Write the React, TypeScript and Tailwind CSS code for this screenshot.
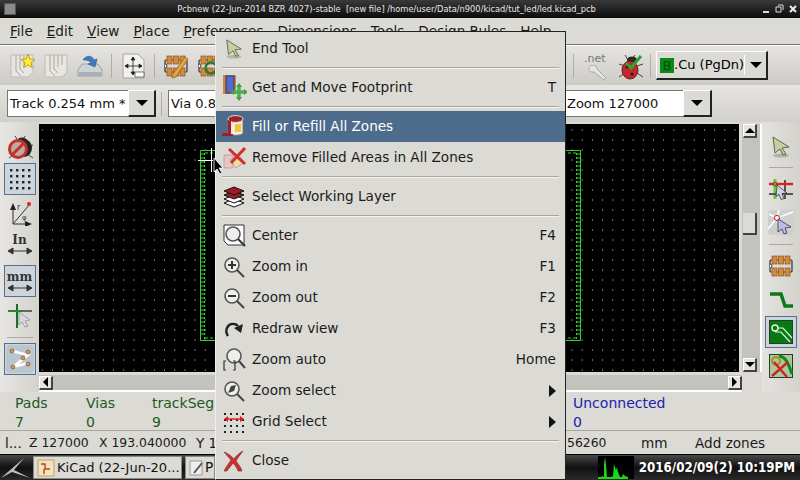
import React from "react";

const font = "font-['DejaVu_Sans',sans-serif]";

// Toolbar icons, small hand drawn svgs
function NewBoard({ star }: { star?: boolean }) {
  return (
    <svg width="26" height="26" viewBox="0 0 26 26">
      <path d="M2 2h22v17l-5 5H2z" fill="#e8e6de" stroke="#bbb" />
      <path d="M7 2v16l5 5M11 2v14l4 4M15 2v12M19 2v10" stroke="#a9a79f" fill="none" />
      {star && <path d="M19 1l2 5 5 .4-4 3.3 1.3 5-4.3-2.8-4.3 2.8 1.3-5-4-3.3 5-.4z" fill="#ffe93b" stroke="#b7a422" />}
    </svg>
  );
}

function SaveIcon() {
  return (
    <svg width="26" height="26" viewBox="0 0 26 26">
      <path d="M1 17l4-6h16l4 6v6H1z" fill="#d0d3d6" stroke="#9a9ea2" />
      <path d="M2 19h22v4H2z" fill="#aab0b5" />
      <path d="M6 7c3-5 9-5 11 0l3-1-2 8-7-3 3-1c-2-3-5-3-8-3z" fill="#3e78c0" stroke="#255a99" strokeWidth="0.6" />
    </svg>
  );
}

function PageIcon() {
  return (
    <svg width="26" height="26" viewBox="0 0 26 26">
      <path d="M3 1h15l6 6v18H3z" fill="#f1f0ea" stroke="#a5a5a0" />
      <path d="M13 4v18M5 13h17M13 4l-2 3h4zM13 22l-2-3h4zM5 13l3-2v4zM22 13l-3-2v4z" fill="#222" stroke="#222" strokeWidth="0.8" />
      <path d="M15 19h9v5h-9z" fill="#fff" stroke="#444" strokeWidth="0.7" />
    </svg>
  );
}

function Chip({ extra }: { extra?: "pencil" | "lens" }) {
  return (
    <svg width="26" height="26" viewBox="0 0 26 26">
      <rect x="2" y="7" width="22" height="12" rx="1" fill="none" stroke="#333" strokeWidth="1.2" />
      <path d="M2 11a2 2 0 010 4" fill="#fff" stroke="#333" />
      {[4, 10.5, 17].map((x) => (
        <g key={x}>
          <rect x={x} y="3" width="5" height="8" fill="#d48a3c" stroke="#8a5520" strokeWidth="0.7" />
          <rect x={x} y="15" width="5" height="8" fill="#d48a3c" stroke="#8a5520" strokeWidth="0.7" />
        </g>
      ))}
      {extra === "pencil" && <path d="M22 4l3 2-12 18-4 1 1-4z" fill="#e9a33c" stroke="#8a5a1c" strokeWidth="0.7" />}
      {extra === "lens" && (
        <g>
          <circle cx="14" cy="15" r="5.5" fill="none" stroke="#2a7a30" strokeWidth="2.4" />
          <path d="M18 19l6 6" stroke="#444" strokeWidth="2.4" />
        </g>
      )}
    </svg>
  );
}

function Cursor({ size = 22 }: { size?: number }) {
  return (
    <svg width={size} height={size} viewBox="0 0 22 22">
      <ellipse cx="11" cy="19.5" rx="8" ry="2" fill="#a3a08f" opacity="0.7" />
      <path d="M3 1l16 10-7 1 4 6-3 1-3-6-5 4z" fill="#c6cfa0" stroke="#5d6650" />
    </svg>
  );
}

function NetIcon() {
  return (
    <div className="relative w-[24px] h-[28px] shrink-0">
      <span className="absolute left-0 top-[-1px] text-[11px] text-[#777]">.net</span>
      <svg width="20" height="16" viewBox="0 0 20 16" className="absolute left-[3px] top-[13px]">
        <path d="M3 1c-2 2-1 5 1 6l3 0 10 8 2-2-9-9-1-3C8 0 5 0 3 1z" fill="#e4e4e2" stroke="#9a9a98" strokeWidth="0.8" />
      </svg>
    </div>
  );
}

function BugIcon({ check }: { check?: boolean }) {
  return (
    <svg width="26" height="28" viewBox="0 0 26 28" className="shrink-0">
      <path d="M8 3l3 5M18 3l-3 5M2 12l6 2M26 12l-6 2M2 25l6-4M26 25l-6-4" stroke="#444" />
      <ellipse cx="15" cy="8" rx="5" ry="3.4" fill="#2a2a2a" />
      {check ? (
        <g>
          <ellipse cx="13" cy="18" rx="8" ry="9" fill="#c0282c" stroke="#701a1c" />
          <circle cx="10" cy="15" r="1.5" fill="#401010" />
          <circle cx="15" cy="22" r="1.5" fill="#401010" />
          <path d="M9 11l5 5 10-12" stroke="#2aa52f" strokeWidth="3" fill="none" />
        </g>
      ) : (
        <g>
          <ellipse cx="17" cy="15" rx="8" ry="9" fill="#222" />
          <circle cx="11" cy="16" r="8.5" fill="#bfa9a0" stroke="#c4302c" strokeWidth="3" />
          <path d="M5 22l12-12" stroke="#c4302c" strokeWidth="3" />
        </g>
      )}
    </svg>
  );
}

function GridIcon() {
  return (
    <svg width="26" height="26" viewBox="0 0 26 26">
      {[3, 9, 15, 21].flatMap((y) =>
        [3, 9, 15, 21].map((x) => <rect key={`${x}-${y}`} x={x} y={y} width="2.4" height="2.4" fill="#222" />)
      )}
    </svg>
  );
}

function PolarIcon() {
  return (
    <svg width="26" height="26" viewBox="0 0 26 26">
      <path d="M6 24V7M6 24h17M6 24l17-20" stroke="#333" strokeWidth="1" fill="none" />
      <path d="M6 3l-3 7h6zM25 24l-7-3v6z" fill="#222" />
      <circle cx="22" cy="4" r="2" fill="#e02020" />
      <text x="10" y="10" fontSize="8" fill="#333">r</text>
      <text x="15" y="20" fontSize="7" fill="#333">φ</text>
    </svg>
  );
}

function UnitIcon({ label }: { label: string }) {
  return (
    <div className="flex flex-col items-center leading-none">
      <span className="font-['DejaVu_Serif',serif] text-[12px] font-bold text-[#333] leading-[13px]">{label}</span>
      <svg width="26" height="8" viewBox="0 0 26 8">
        <path d="M1 4l5-3v6zM25 4l-5-3v6zM5 4h16" fill="#333" stroke="#333" />
      </svg>
    </div>
  );
}

function CrossCursor() {
  return (
    <svg width="26" height="26" viewBox="0 0 26 26">
      <path d="M10 2v24" stroke="#1d6b2d" strokeWidth="2" />
      <path d="M1 9h24" stroke="#333" strokeWidth="1.4" />
      <path d="M1 9h14" stroke="#1d8b2d" strokeWidth="2" />
      <path d="M12 10l11 8-5 1 3 5-3 1-3-5-3 3z" fill="#d6d8de" stroke="#888" strokeWidth="0.7" />
    </svg>
  );
}

function RatsIcon() {
  return (
    <svg width="28" height="28" viewBox="0 0 28 28">
      <rect width="28" height="28" rx="4" fill="#b9c6d2" />
      <path d="M6 6l16 4-15 12 15-4" stroke="#fff" strokeWidth="2.6" fill="none" />
      {[[6, 6], [22, 7], [17, 13], [7, 22], [22, 19]].map(([x, y]) => (
        <circle key={`${x}${y}`} cx={x} cy={y} r="2" fill="#d79a4c" stroke="#7a5522" strokeWidth="0.7" />
      ))}
    </svg>
  );
}

function GridCursor() {
  return (
    <svg width="26" height="22" viewBox="0 0 26 22">
      <path d="M7 1v20" stroke="#5fd030" strokeWidth="3" />
      <path d="M17 2v19M1 16h24" stroke="#555" strokeWidth="2" />
      <path d="M1 6h24" stroke="#e02020" strokeWidth="2.4" />
      <circle cx="7" cy="6" r="2" fill="#b88a20" stroke="#333" strokeWidth="0.6" />
      <path d="M9 7l10 8-5 .5 2 5-3 1-2-5-3 2z" fill="#cfd2ea" stroke="#222" strokeWidth="0.7" />
    </svg>
  );
}

function RayCursor() {
  return (
    <svg width="28" height="27" viewBox="0 0 28 27">
      <rect x="1" y="1" width="26" height="25" rx="4" fill="#cfcfcf" />
      <path d="M10 9L2 5M10 9l2-8M10 9l16-6M10 9L1 20M10 9l2 7" stroke="#fff" strokeWidth="1.6" />
      <circle cx="10" cy="9" r="2.6" fill="none" stroke="#d02020" />
      <path d="M11 10l13 8-6 1 2 5-3 1-2-5-4 3z" fill="#b9bde6" stroke="#222" strokeWidth="0.7" />
    </svg>
  );
}

function TrackIcon() {
  return (
    <svg width="26" height="18" viewBox="0 0 26 18">
      <path d="M2 3h11l4 12h8" stroke="#0a7a18" strokeWidth="3.4" fill="none" />
    </svg>
  );
}

function ZoneIcon() {
  return (
    <svg width="24" height="24" viewBox="0 0 24 24">
      <rect x="0.5" y="0.5" width="23" height="23" fill="#057a10" stroke="#2a3a2a" />
      <circle cx="6" cy="8" r="3" fill="none" stroke="#e6f0e6" strokeWidth="1.4" />
      <path d="M9 8h5l9 10M6 12h6l9 10" stroke="#e6f0e6" strokeWidth="1.2" fill="none" />
    </svg>
  );
}

function NoZoneIcon() {
  return (
    <svg width="24" height="24" viewBox="0 0 24 24">
      <rect x="0.5" y="0.5" width="23" height="23" fill="#a8c8a0" stroke="#2a3a2a" />
      <path d="M10 2c8 1 10 10 13 18" stroke="#0e8a20" strokeWidth="3" fill="none" />
      <circle cx="7" cy="7" r="4" fill="none" stroke="#a8901c" strokeWidth="2" />
      <path d="M3 22L19 8M5 8l13 15" stroke="#d42020" strokeWidth="2.4" />
    </svg>
  );
}

function LayerIcon() {
  return (
    <svg width="24" height="22" viewBox="0 0 24 22">
      <path d="M2 17l10-4 10 4-10 4z" fill="#fff" stroke="#111" />
      <path d="M2 13l10-4 10 4-10 4z" fill="#fff" stroke="#111" />
      <path d="M2 9l10-4 10 4-10 4z" fill="#9a1c24" stroke="#111" />
      <path d="M2 5l10-4 10 4-10 4z" fill="#9a1c24" stroke="#111" />
    </svg>
  );
}

function Magnifier({ mark }: { mark?: string }) {
  return (
    <svg width="22" height="22" viewBox="0 0 22 22">
      <circle cx="9" cy="9" r="7" fill="#eeeeec" stroke="#555" strokeWidth="1.6" />
      <path d="M14 14l7 7" stroke="#444" strokeWidth="2" />
      {mark === "plus" && <path d="M5 9h8M9 5v8" stroke="#333" strokeWidth="2" />}
      {mark === "minus" && <path d="M5 9h8" stroke="#333" strokeWidth="2" />}
      {mark === "select" && <path d="M5 13l3-7 5-1-2 6z" fill="#444" />}
    </svg>
  );
}

function CenterIcon() {
  return (
    <svg width="24" height="24" viewBox="0 0 24 24">
      <path d="M2 1h20v20H6l-4-4z" fill="#fff" stroke="#333" />
      <circle cx="11" cy="10" r="7" fill="#eeeeec" stroke="#555" strokeWidth="1.6" />
      <path d="M16 15l7 7" stroke="#333" strokeWidth="2" />
    </svg>
  );
}

function RedrawIcon() {
  return (
    <svg width="22" height="22" viewBox="0 0 22 22">
      <path d="M5 18C1 12 5 5 11 6c2 0 3 1 4 2" stroke="#222" strokeWidth="2.4" fill="none" />
      <path d="M20 6l-2 9-7-5z" fill="#222" />
    </svg>
  );
}

function ZoomAuto() {
  return (
    <svg width="24" height="24" viewBox="0 0 24 24">
      <circle cx="12" cy="8" r="7" fill="#eeeeec" stroke="#555" strokeWidth="1.6" />
      <path d="M17 13l6 7" stroke="#444" strokeWidth="2" />
      <path d="M4 13H2v9h2M11 13h2v9h-2" stroke="#333" strokeWidth="1.2" fill="none" />
    </svg>
  );
}

function GridSelect() {
  return (
    <svg width="22" height="22" viewBox="0 0 22 22">
      {[2, 8, 14, 20].flatMap((y) =>
        [1, 7, 13, 19].map((x) => <rect key={`${x}-${y}`} x={x} y={y} width="2" height="2" fill="#222" />)
      )}
      <path d="M2 8h18" stroke="#e01818" strokeWidth="1.4" />
      <path d="M1 8l4-3v6zM21 8l-4-3v6z" fill="#e01818" />
    </svg>
  );
}

function CloseIcon() {
  return (
    <svg width="22" height="22" viewBox="0 0 22 22">
      <path d="M1 2c7 3 9 6 10 7 2-3 5-6 9-8-3 4-6 8-7 10 2 3 5 6 6 10l-4 0c-1-3-3-6-5-8-2 3-5 6-6 8H1c2-4 5-8 7-11C6 7 3 5 1 2z" fill="#c8342c" stroke="#7d201c" strokeWidth="0.6" />
    </svg>
  );
}

function FootprintMove() {
  return (
    <svg width="26" height="26" viewBox="0 0 26 26">
      <rect x="2" y="0" width="13" height="19" fill="#c98a3c" />
      <rect x="5" y="1" width="8" height="17" fill="#5a68c8" stroke="#2c3377" />
      <path d="M18 10v14M11 17h14" stroke="#4cb04c" strokeWidth="3.4" />
      <path d="M18 8l-3 4h6zM18 26l-3-4h6zM9 17l4-3v6zM27 17l-4-3v6z" fill="#3ea03e" />
    </svg>
  );
}

function FillIcon() {
  return (
    <svg width="26" height="26" viewBox="0 0 26 26">
      <path d="M7 5v14c0 3 15 3 15 0V5z" fill="#f2ede0" stroke="#777" />
      <ellipse cx="14.5" cy="5" rx="7.5" ry="3.4" fill="#a2202a" stroke="#e6e0d4" />
      <rect x="14" y="10" width="6" height="8" fill="#eec63a" />
      <path d="M7 6v13H1v3h11v-2H10V7z" fill="#a2202a" />
    </svg>
  );
}

function RemoveFill() {
  return (
    <svg width="26" height="24" viewBox="0 0 26 24">
      <path d="M3 9h9v13H3z" fill="#e3c8c0" stroke="#b48" strokeWidth="0.4" />
      <path d="M9 14l9-5 5 7-8 6z" fill="#f0dca0" stroke="#aaa" />
      <path d="M8 3l16 15M24 2L10 17" stroke="#d0302c" strokeWidth="3" />
    </svg>
  );
}

function BoardOutline() {
  // only the two ends of the outline stay visible beside the open menu
  const ticks = [];
  for (let y = 4; y < 188; y += 4) ticks.push(y);
  return (
    <svg width="382" height="192" viewBox="0 0 382 192" className="absolute left-[161px] top-[26px]">
      <path d="M.5.5h380v190H.5z" fill="none" stroke="#35d435" />
      <path d="M4.5 3v186M376.5 3v186" stroke="#35d435" strokeDasharray="2 2" />
      {ticks.map((y) => (
        <g key={y}>
          <path d={`M1 ${y}h3`} stroke="#35d435" />
          <path d={`M377 ${y}h3`} stroke="#35d435" />
        </g>
      ))}
      <path d="M5 3h8M368 3h8M5 188h8M368 188h8" stroke="#35d435" strokeDasharray="3 2" />
    </svg>
  );
}

const Sep = () => <div className="h-[2px] mx-[6px] my-[3px] border-t border-[#a8a6a0] bg-[#f4f3f0]" />;

function MenuItem({ icon, label, hot, active, arrow }: { icon: React.ReactNode; label: string; hot?: string; active?: boolean; arrow?: boolean }) {
  return (
    <div className={`flex items-center h-[31px] pl-[3px] pr-[9px] ${active ? "bg-[#4d6b8a] text-white" : "text-[#1a1a1a]"}`}>
      <div className="w-[33px] flex justify-center shrink-0 pr-[3px]">{icon}</div>
      <span className="flex-1">{label}</span>
      {hot && <span>{hot}</span>}
      {arrow && <span className="w-0 h-0 border-y-[6px] border-y-transparent border-l-[7px] border-l-[#111]" />}
    </div>
  );
}

function Arrow({ dir }: { dir: "up" | "down" | "left" | "right" }) {
  const cls = {
    up: "border-x-[5px] border-x-transparent border-b-[5px] border-b-black",
    down: "border-x-[5px] border-x-transparent border-t-[5px] border-t-black",
    left: "border-y-[5px] border-y-transparent border-r-[5px] border-r-black",
    right: "border-y-[5px] border-y-transparent border-l-[5px] border-l-black",
  }[dir];
  return (
    <div className="w-[14px] h-[14px] flex items-center justify-center bg-[#e6e4e0] border-r-2 border-b-2 border-black/70 border-t border-l border-t-white border-l-white shrink-0">
      <div className={`w-0 h-0 ${cls}`} />
    </div>
  );
}

function Combo({ text, w, btn = 28 }: { text: string; w: number; btn?: number }) {
  return (
    <div className="flex h-[27px] shrink-0 text-[13px]" style={{ width: w }}>
      <div className="flex-1 min-w-0 bg-white border border-[#777] border-r-0 pl-[2px] flex items-center whitespace-nowrap overflow-hidden text-[#111]">{text}</div>
      <div className="flex items-center justify-center bg-[#dcdad5] border-r-2 border-b-2 border-[#222] border-t border-l border-t-white border-l-white shrink-0" style={{ width: btn }}>
        <span className="w-0 h-0 border-x-[6px] border-x-transparent border-t-[6px] border-t-black" />
      </div>
    </div>
  );
}

const TbSep = () => <div className="w-px h-[24px] bg-[#b0aea8] shrink-0" />;

function Toggled({ children, className = "" }: { children: React.ReactNode; className?: string }) {
  return <div className={`w-[32px] h-[32px] flex items-center justify-center border border-[#56708c] bg-[#ccd4dc] shrink-0 ${className}`}>{children}</div>;
}

export default function App() {
  return (
    <div className={`${font} relative w-[800px] h-[480px] overflow-hidden bg-[#dcdad5] text-[13.6px] flex flex-col`}>
      {/* title bar */}
      <div className="h-[18px] shrink-0 flex items-center bg-gradient-to-b from-[#3a3a3a] to-[#0c0c0c] text-[#e8e8e8] relative">
        <div className="w-[12px] h-[12px] ml-[4px] bg-[#8a8a86] border border-[#555] shrink-0" />
        <div className="flex-1 text-center pr-[4px] whitespace-pre text-[9.2px] [font-stretch:condensed]">Pcbnew (22-Jun-2014 BZR 4027)-stable  [new file] /home/user/Data/n900/kicad/tut_led/led.kicad_pcb</div>
        <svg width="36" height="10" viewBox="0 0 36 10" className="mr-[3px] shrink-0">
          <path d="M2 8h6" stroke="#ddd" strokeWidth="2" />
          <path d="M15 3h5v5h-5zM17 1h5v5" fill="none" stroke="#ddd" />
          <path d="M29 2l6 6M35 2l-6 6" stroke="#eee" strokeWidth="2" />
        </svg>
      </div>

      {/* menu bar */}
      <div className="h-[27px] shrink-0 flex items-center pl-[10px] gap-[14px] border-b border-[#77756f] text-[#1a1a1a] whitespace-nowrap">
        {["File", "Edit", "View", "Place", "Preferences", "Dimensions", "Tools", "Design Rules", "Help"].map((m) => (
          <span key={m}>
            <span className="underline">{m[0]}</span>
            {m.slice(1)}
          </span>
        ))}
      </div>

      {/* main toolbar */}
      <div className="h-[40px] shrink-0 flex items-center pl-[9px] gap-[8px] bg-gradient-to-b from-[#e6e4e0] to-[#cdcbc6] border-t border-white">
        <NewBoard star />
        <NewBoard />
        <SaveIcon />
        <TbSep />
        <PageIcon />
        <TbSep />
        <Chip extra="pencil" />
        <Chip extra="lens" />
        <div className="ml-[342px] flex items-center">
          <TbSep />
          <div className="ml-[10px]"><NetIcon /></div>
          <div className="ml-[9px]"><BugIcon check /></div>
          <div className="ml-[7px]"><TbSep /></div>
          <div className="ml-[5px] flex items-center h-[29px] w-[112px] bg-[#dcdad5] border-r-2 border-b-2 border-[#222] border-t border-l border-t-white border-l-white pl-[3px] text-[13px]">
            <span className="w-[14px] h-[15px] shrink-0 bg-[#0a8a14] text-[#044a10] text-[13px] leading-[15px] text-center">B</span>
            <span className="flex-1 whitespace-nowrap">.Cu (PgDn)</span>
            <span className="w-px h-[20px] bg-white mr-[5px] shrink-0" />
            <span className="w-0 h-0 shrink-0 border-x-[6px] border-x-transparent border-t-[6px] border-t-black mr-[5px]" />
          </div>
        </div>
      </div>

      {/* aux toolbar */}
      <div className="h-[37px] shrink-0 flex items-center pl-[7px] bg-gradient-to-b from-[#e6e4e0] to-[#d2d0cb]">
        <Combo text="Track 0.254 mm *" w={149} />
        <div className="ml-[5px]"><TbSep /></div>
        <div className="ml-[6px]"><Combo text="Via 0.8" w={200} /></div>
        <div className="ml-[196px]"><Combo text="Zoom 127000" w={148} btn={29} /></div>
      </div>

      {/* work area */}
      <div className="h-[270px] shrink-0 flex min-h-0">
        <div className="w-[39px] shrink-0 flex flex-col items-center pt-[11px] bg-gradient-to-r from-[#e8e6e2] to-[#d4d2cd]">
          <BugIcon />
          <Toggled className="mt-[2px]"><GridIcon /></Toggled>
          <div className="mt-[5px]"><PolarIcon /></div>
          <div className="mt-[8px]"><UnitIcon label="In" /></div>
          <Toggled className="mt-[10px]"><UnitIcon label="mm" /></Toggled>
          <div className="mt-[5px]"><CrossCursor /></div>
          <div className="w-[26px] h-px bg-[#aaa] mt-[9px]" />
          <Toggled className="mt-[5px]"><RatsIcon /></Toggled>
        </div>

        <div className="flex-1 flex flex-col min-w-0">
          <div className="flex-1 flex min-h-0">
            <div className="relative flex-1 mt-[2px] mb-[3px] bg-black bg-[radial-gradient(circle_at_3px_6px,#a0a0a0_0.5px,transparent_0.7px)] bg-[size:10.2px_10px]">
              <BoardOutline />
              {/* crosshair */}
              <div className="absolute left-[159px] top-[36px] w-[15px] h-px bg-white" />
              <div className="absolute left-[172px] top-[24px] h-[24px] w-px bg-white" />
            </div>
            <div className="w-[20px] shrink-0 flex flex-col ml-[3px] mt-[2px] mb-[3px] bg-[#c4c2bd] border-r-2 border-white px-[1px]">
              <Arrow dir="up" />
              <div className="flex-1 relative">
                <div className="absolute left-0 top-[75px] w-[14px] h-[22px] bg-[#dcdad5] border-r-2 border-b-2 border-black/70" />
              </div>
              <Arrow dir="down" />
            </div>
          </div>
          <div className="h-[17px] shrink-0 flex items-center bg-[#c4c2bd] mr-[20px] border-b-2 border-white">
            <Arrow dir="left" />
            <div className="flex-1" />
            <Arrow dir="right" />
          </div>
        </div>

        <div className="w-[38px] shrink-0 flex flex-col items-center pt-[14px] bg-gradient-to-r from-[#e4e2de] to-[#d4d2cd]">
          <Cursor size={22} />
          <div className="w-[24px] h-px bg-[#aaa] mt-[9px]" />
          <div className="mt-[10px]"><GridCursor /></div>
          <div className="mt-[9px]"><RayCursor /></div>
          <div className="w-[24px] h-px bg-[#aaa] mt-[8px]" />
          <div className="mt-[8px]"><Chip /></div>
          <div className="mt-[12px]"><TrackIcon /></div>
          <Toggled className="mt-[7px]"><ZoneIcon /></Toggled>
          <div className="mt-[6px]"><NoZoneIcon /></div>
        </div>
      </div>

      {/* message panel */}
      <div className="h-[39px] shrink-0 relative border-b border-b-[#a8a6a0] text-[#1d5a1d] leading-[19px] text-[14px]">
        <div className="flex pl-[15px] pt-[2px]">
          <div className="w-[71px]">Pads<br />7</div>
          <div className="w-[66px]">Vias<br />0</div>
          <div className="w-[421px] whitespace-nowrap">trackSegm<br />9</div>
          <div className="text-[#2020b0]">Unconnected<br />0</div>
        </div>
      </div>

      {/* status bar */}
      <div className="h-[23px] shrink-0 flex items-center pt-[1px] text-[#1a1a1a] whitespace-pre">
        <span className="pl-[5px] w-[29px]">l...</span>
        <span className="w-[70px] text-[12.4px]">Z 127000</span>
        <span className="w-[97px] text-[12.4px]">X 193.040000</span>
        <span className="w-[371px]">Y 1</span>
        <span className="w-[74px] text-[12.4px]">56260</span>
        <span className="w-[54px]">mm</span>
        <span>Add zones</span>
      </div>

      {/* task bar */}
      <div className="h-[26px] shrink-0 flex items-center bg-gradient-to-b from-[#4a4a4a] via-[#111] to-[#2a2a2a] border-t border-black">
        <svg width="33" height="24" viewBox="0 0 33 24" className="shrink-0">
          <path d="M1 22L24 2 14 14l16 8-18-6z" fill="#bfbfbf" />
        </svg>
        <div className="w-[149px] h-[23px] flex items-center pl-[3px] gap-[2px] bg-[#dcdad5] border border-[#888] text-[#111] whitespace-nowrap text-[13px] shrink-0">
          <svg width="18" height="18" viewBox="0 0 18 18" className="shrink-0">
            <rect x="1" y="1" width="16" height="16" fill="#f0e4c0" stroke="#c8a050" />
            <path d="M4 5h4v5h5M7 10v5" stroke="#b84020" strokeWidth="1.4" fill="none" />
          </svg>
          KiCad (22-Jun-20...
        </div>
        <div className="w-[30px] h-[23px] ml-[3px] flex items-center pl-[3px] bg-[#dcdad5] border border-[#888] text-[#111] shrink-0">
          <svg width="16" height="18" viewBox="0 0 16 18" className="shrink-0">
            <path d="M1 2h12v14H1z" fill="#eee" stroke="#999" />
            <path d="M5 14l8-10" stroke="#555" strokeWidth="2" />
          </svg>
          P
        </div>
        <div className="flex-1" />
        <svg width="36" height="23" viewBox="0 0 36 23" className="mr-[5px] shrink-0">
          <rect width="36" height="23" fill="#000" />
          <path d="M0 23v-2h3l1-1 2 1V8l1-7 1 8 1 12h4l2-1 1-12 2 6 1-3 1 5 2 5h2l1-3 2 2 3 1v3z" fill="#18d818" />
        </svg>
        <span className="text-white font-bold text-[13.2px] [font-stretch:condensed] pr-[5px] whitespace-nowrap">2016/02/09(2) 10:19PM</span>
      </div>

      {/* open context menu */}
      <div className="absolute left-[215px] top-[31px] w-[351px] h-[449px] bg-[#dcdad5] border-t border-b border-r border-[#222] border-l border-l-[#eee] pt-[1px]">
        <MenuItem icon={<Cursor size={20} />} label="End Tool" />
        <Sep />
        <MenuItem icon={<FootprintMove />} label="Get and Move Footprint" hot="T" />
        <Sep />
        <MenuItem icon={<FillIcon />} label="Fill or Refill All Zones" active />
        <MenuItem icon={<RemoveFill />} label="Remove Filled Areas in All Zones" />
        <Sep />
        <MenuItem icon={<LayerIcon />} label="Select Working Layer" />
        <Sep />
        <MenuItem icon={<CenterIcon />} label="Center" hot="F4" />
        <MenuItem icon={<Magnifier mark="plus" />} label="Zoom in" hot="F1" />
        <MenuItem icon={<Magnifier mark="minus" />} label="Zoom out" hot="F2" />
        <MenuItem icon={<RedrawIcon />} label="Redraw view" hot="F3" />
        <MenuItem icon={<ZoomAuto />} label="Zoom auto" hot="Home" />
        <MenuItem icon={<Magnifier mark="select" />} label="Zoom select" arrow />
        <MenuItem icon={<GridSelect />} label="Grid Select" arrow />
        <Sep />
        <MenuItem icon={<CloseIcon />} label="Close" />
      </div>

      {/* mouse pointer */}
      <svg width="12" height="18" viewBox="0 0 12 18" className="absolute left-[213px] top-[157px]">
        <path d="M1 1v14l3-3 3 5 2-1-3-5h4z" fill="#000" stroke="#fff" strokeWidth="0.8" />
      </svg>
    </div>
  );
}
